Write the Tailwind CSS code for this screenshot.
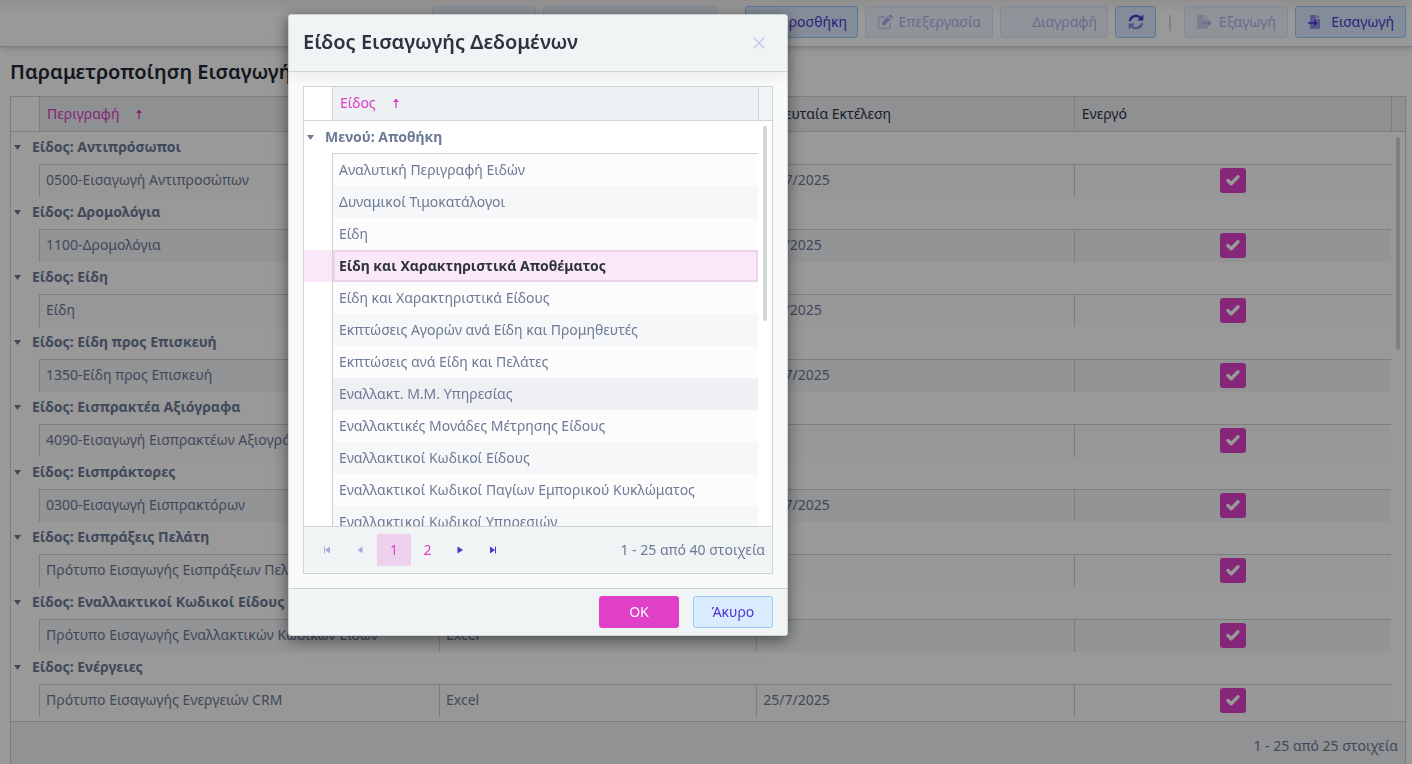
<!DOCTYPE html>
<html lang="el">
<head>
    <meta charset="UTF-8">
    <meta name="viewport" content="width=device-width, initial-scale=1.0">
    <title>Παραμετροποίηση Εισαγωγής Δεδομένων</title>
    <script src="https://cdn.jsdelivr.net/npm/@tailwindcss/browser@4"></script>
</head>
<body class="h-screen overflow-hidden bg-white font-['Noto_Sans',sans-serif] text-sm text-[#6c7a96]">
    <div class="flex h-full flex-col">
        <!-- Toolbar -->
        <header class="relative flex h-[47px] shrink-0 items-start justify-end gap-[7px] border-b border-[#d0d3d4] bg-gradient-to-b from-[#efefef] to-white to-30% pt-1.5 pr-1.5 text-[#4b36d0] shadow-md">
            <button aria-label="Αντιγραφή" disabled class="h-8 w-[104px] rounded-[3px] border border-[#99ccf9] bg-[#dbebff] opacity-40"></button>
            <button aria-label="Μαζική Εκτέλεση" disabled class="mr-[21px] h-8 w-[174px] rounded-[3px] border border-[#99ccf9] bg-[#dbebff] opacity-40"></button>
            <button class="flex h-8 w-[113px] items-center justify-end rounded-[3px] border border-[#99ccf9] bg-[#dbebff] pr-2.5">Προσθήκη</button>
            <button disabled class="flex h-8 w-32 items-center justify-between rounded-[3px] border border-[#99ccf9] bg-[#dbebff] px-[11px] opacity-40">
                <svg class="size-4" viewBox="0 0 16 16"><path d="M8 3H3.500A2 2 0 0 0 1.500 5v7.500a2 2 0 0 0 2 2H11a2 2 0 0 0 2-2V9" fill="none" stroke="currentColor" stroke-width="2" opacity=".5"/><path d="M5 11.200V8.300l5.700-5.700 2.900 2.900-5.700 5.700zM11.500 1.800l1-1a1.300 1.300 0 0 1 1.800 0l1.100 1.100a1.300 1.300 0 0 1 0 1.800l-1 1z" fill="currentColor"/></svg>
                Επεξεργασία
            </button>
            <button disabled class="flex h-8 w-[108px] items-center justify-end rounded-[3px] border border-[#99ccf9] bg-[#dbebff] pr-2.5 opacity-40">Διαγραφή</button>
            <button aria-label="Ανανέωση" class="flex h-8 w-[41px] items-center justify-center rounded-[3px] border border-[#99ccf9] bg-[#dbebff]">
                <svg class="size-4" viewBox="0 0 16 16" fill="none" stroke="currentColor" stroke-width="2.400"><path d="M1.800 7A6.200 6.200 0 0 1 12.600 4"/><path d="M15.300.6v6H9.200z" fill="currentColor" stroke="none"/><g opacity=".55"><path d="M14.200 9A6.200 6.200 0 0 1 3.400 12"/><path d="M.7 15.400v-6h6.100z" fill="currentColor" stroke="none"/></g></svg>
            </button>
            <span class="mx-1.5 mt-[9px] h-4 w-0.5 bg-[#d5d9da]"></span>
            <button disabled class="flex h-8 w-[104px] items-center justify-between rounded-[3px] border border-[#99ccf9] bg-[#dbebff] px-[11px] opacity-40">
                <svg class="size-4" viewBox="0 0 16 16" fill="currentColor"><path d="M2 1h6v4h4v9a1 1 0 0 1-1 1H2a1 1 0 0 1-1-1V2a1 1 0 0 1 1-1zM9 1l3 3H9z" opacity=".5"/><path d="M6 8.200h6V5.800L15.800 9 12 12.200V9.800H6z"/></svg>
                Εξαγωγή
            </button>
            <button class="flex h-8 w-[111px] items-center justify-between rounded-[3px] border border-[#99ccf9] bg-[#dbebff] px-[11px]">
                <svg class="size-4" viewBox="0 0 16 16" fill="currentColor"><path d="M4 1h5v4h4v9a1 1 0 0 1-1 1H4a1 1 0 0 1-1-1V2a1 1 0 0 1 1-1zM10 1l3 3h-3z" opacity=".5"/><path d="M1 8.200h6V5.800L10.800 9 7 12.200V9.800H1z"/></svg>
                Εισαγωγή
            </button>
        </header>

        <main class="flex min-h-0 flex-1 flex-col pr-1.5 pl-2.5">
            <h1 class="flex h-[49px] shrink-0 items-center text-xl font-semibold text-[#232733]">Παραμετροποίηση Εισαγωγής Δεδομένων</h1>
            <div class="relative min-h-0 flex-1 overflow-hidden border border-b-0 border-[#d0d3d4]">
                <table class="w-full table-fixed border-separate border-spacing-0 text-left">
                    <colgroup><col class="w-7"><col class="w-[400px]"><col><col><col><col class="w-3.5"></colgroup>
                    <thead class="bg-[#eef1f4] text-[#2d333f]">
                        <tr class="h-[35px]">
                            <td class="border-b border-[#d0d3d4] bg-white"></td>
                            <th class="border-b border-l border-[#d0d3d4] px-[7px] font-normal text-[#e040c8]">
                                <span class="flex items-center gap-4">Περιγραφή
                                    <svg class="h-2.5 w-2" viewBox="0 0 8 10" fill="none" stroke="currentColor"><path d="M4 10V1" stroke-width="1.300"/><path d="M1 4l3-3.600L7 4z" fill="currentColor" stroke="none"/></svg>
                                </span>
                            </th>
                            <th class="border-b border-l border-[#d0d3d4] px-[7px] font-normal">Τύπος</th>
                            <th class="border-b border-l border-[#d0d3d4] px-[7px] font-normal">Τελευταία Εκτέλεση</th>
                            <th class="border-b border-l border-[#d0d3d4] px-[7px] font-normal">Ενεργό</th>
                            <td class="border-b border-l border-[#d0d3d4]"></td>
                        </tr>
                    </thead>
                    <tbody id="imports"></tbody>
                </table>
                <div class="absolute top-10 right-[5px] h-[213px] w-1 rounded-full bg-[#d0d6d6]"></div>
            </div>
            <div class="flex h-[43px] shrink-0 items-start justify-end border-x border-t border-[#d0d3d4] bg-[#f0f3f5] px-[7px] pt-2 leading-8">1 - 25 από 25 στοιχεία</div>
        </main>
    </div>

    <div class="fixed inset-0 bg-black/40"></div>

    <!-- Dialog -->
    <section role="dialog" aria-labelledby="dialogTitle" class="fixed top-3.5 left-72 w-[500px] rounded-[3px] border border-[#d0d3d4] bg-[#f9fafc] shadow-[0_4px_16px_rgba(0,0,0,0.5)]">
        <header class="flex h-[57px] items-center justify-between rounded-t-[3px] border-b border-[#d0d3d4] bg-[#f0f4f5] px-3.5 shadow-[0_4px_16px_rgba(0,0,0,0.07)]">
            <h2 id="dialogTitle" class="pb-0.5 text-xl font-semibold text-[#2d333f]">Είδος Εισαγωγής Δεδομένων</h2>
            <button aria-label="Κλείσιμο" class="flex size-7 items-center justify-center text-[#cac6f3]">
                <svg class="size-3" viewBox="0 0 12 12" fill="none" stroke="currentColor" stroke-width="1.500"><path d="M.8.8l10.400 10.400M11.200.8L.8 11.200"/></svg>
            </button>
        </header>
        <div class="p-3.5">
            <div class="border border-[#d0d3d4] bg-white">
                <div class="relative h-[439px] overflow-hidden">
                    <table class="w-full table-fixed border-separate border-spacing-0 text-left">
                        <colgroup><col class="w-7"><col><col class="w-3.5"></colgroup>
                        <thead>
                            <tr class="h-[34px] bg-[#edf1f4]">
                                <td class="border-b border-[#d0d3d4] bg-white"></td>
                                <th class="border-b border-l border-[#d0d3d4] px-[7px] pb-0.5 font-normal text-[#e040c8]">
                                    <span class="flex items-center gap-4">Είδος
                                        <svg class="h-2.5 w-2" viewBox="0 0 8 10" fill="none" stroke="currentColor"><path d="M4 10V1" stroke-width="1.300"/><path d="M1 4l3-3.600L7 4z" fill="currentColor" stroke="none"/></svg>
                                    </span>
                                </th>
                                <td class="border-b border-l border-[#d0d3d4] bg-[#f0f4f5]"></td>
                            </tr>
                        </thead>
                        <tbody id="kinds"></tbody>
                    </table>
                    <div class="absolute top-[39px] right-[5px] h-[195px] w-1 rounded-full bg-[#d0d6d6]"></div>
                </div>
                <div class="flex h-[47px] items-center border-t border-[#d0d3d4] bg-[#f0f4f5] px-[7px] text-[#4b36d0]">
                    <button aria-label="Πρώτη σελίδα" disabled class="flex h-8 w-[33px] items-center justify-center pr-0.5 opacity-40">
                        <svg class="h-2 w-2" viewBox="0 0 8 8" fill="currentColor"><path d="M1 .5h1v7H1zM7 .5v7L2 4z"/></svg>
                    </button>
                    <button aria-label="Προηγούμενη σελίδα" disabled class="flex h-8 w-[33px] items-center justify-center pr-0.5 opacity-40">
                        <svg class="h-2 w-2" viewBox="0 0 8 8" fill="currentColor"><path d="M6.500.5v7L1.500 4z"/></svg>
                    </button>
                    <button class="h-8 w-[34px] bg-[#eed1ec] text-[#e040c8]">1</button>
                    <button class="h-8 w-[33px] text-[#e040c8]">2</button>
                    <button aria-label="Επόμενη σελίδα" class="flex h-8 w-[33px] items-center justify-center pr-0.5">
                        <svg class="h-2 w-2" viewBox="0 0 8 8" fill="currentColor"><path d="M1.500.5v7L7 4z"/></svg>
                    </button>
                    <button aria-label="Τελευταία σελίδα" class="flex h-8 w-[33px] items-center justify-center pr-0.5">
                        <svg class="h-2 w-2" viewBox="0 0 8 8" fill="currentColor"><path d="M1 .5v7L6 4zM6 .5h1v7H6z"/></svg>
                    </button>
                    <span class="ml-auto text-[#6c7a96]">1 - 25 από 40 στοιχεία</span>
                </div>
            </div>
        </div>
        <footer class="flex h-[47px] items-center justify-end gap-3.5 rounded-b-[3px] border-t border-[#d0d3d4] bg-[#f0f4f5] px-3.5">
            <button class="h-8 w-20 rounded-[3px] bg-[#e040c8] text-white">OK</button>
            <button class="h-8 w-20 rounded-[3px] border border-[#99ccf9] bg-[#dbebff] text-[#4b36d0]">Άκυρο</button>
        </footer>
    </section>

    <script>
        const imports = [
            { group: 'Αντιπρόσωποι', name: '0500-Εισαγωγή Αντιπροσώπων', date: '25/7/2025' },
            { group: 'Δρομολόγια', name: '1100-Δρομολόγια', date: '9/7/2025' },
            { group: 'Είδη', name: 'Είδη', date: '9/7/2025' },
            { group: 'Είδη προς Επισκευή', name: '1350-Είδη προς Επισκευή', date: '25/7/2025' },
            { group: 'Εισπρακτέα Αξιόγραφα', name: '4090-Εισαγωγή Εισπρακτέων Αξιογράφων', date: '' },
            { group: 'Εισπράκτορες', name: '0300-Εισαγωγή Εισπρακτόρων', date: '25/7/2025' },
            { group: 'Εισπράξεις Πελάτη', name: 'Πρότυπο Εισαγωγής Εισπράξεων Πελάτη', date: '' },
            { group: 'Εναλλακτικοί Κωδικοί Είδους', name: 'Πρότυπο Εισαγωγής Εναλλακτικών Κωδικών Ειδών', date: '' },
            { group: 'Ενέργειες', name: 'Πρότυπο Εισαγωγής Ενεργειών CRM', date: '25/7/2025' }
        ];
        const kinds = [
            'Αναλυτική Περιγραφή Ειδών',
            'Δυναμικοί Τιμοκατάλογοι',
            'Είδη',
            'Είδη και Χαρακτηριστικά Αποθέματος',
            'Είδη και Χαρακτηριστικά Είδους',
            'Εκπτώσεις Αγορών ανά Είδη και Προμηθευτές',
            'Εκπτώσεις ανά Είδη και Πελάτες',
            'Εναλλακτ. Μ.Μ. Υπηρεσίας',
            'Εναλλακτικές Μονάδες Μέτρησης Είδους',
            'Εναλλακτικοί Κωδικοί Είδους',
            'Εναλλακτικοί Κωδικοί Παγίων Εμπορικού Κυκλώματος',
            'Εναλλακτικοί Κωδικοί Υπηρεσιών'
        ];
        const selected = 3;
        const hovered = 7;

        const caret = '<svg class="h-[5px] w-[7px]" viewBox="0 0 7 5" fill="currentColor"><path d="M0 0h7L3.500 5z"/></svg>';

        document.getElementById('imports').innerHTML = imports.map((row, i) => {
            const bg = i % 2 ? 'bg-[#f5f7f9]' : 'bg-[#fcfcfc]';
            return `
                <tr class="h-8">
                    <th colspan="6" class="pb-0.5 pl-[3px] font-bold"><span class="flex items-center gap-[11px]">${caret}Είδος: ${row.group}</span></th>
                </tr>
                <tr class="h-[33px]">
                    <td></td>
                    <td class="truncate border-t border-l border-[#d0d3d4] px-1.5 pb-0.5 ${bg}">${row.name}</td>
                    <td class="border-t border-l border-[#d0d3d4] px-1.5 pb-0.5 ${bg}">Excel</td>
                    <td class="border-t border-l border-[#d0d3d4] px-1.5 pb-0.5 ${bg}">${row.date}</td>
                    <td class="border-t border-l border-[#d0d3d4] pb-0.5 ${bg}">
                        <label class="grid place-items-center">
                            <input type="checkbox" checked aria-label="Ενεργό: ${row.name}" class="col-start-1 row-start-1 h-[25px] w-[26px] appearance-none rounded-[3px] bg-[#e040c8]">
                            <svg class="pointer-events-none col-start-1 row-start-1 size-4" viewBox="0 0 16 16" fill="none" stroke="white" stroke-width="3.400" stroke-linecap="round" stroke-linejoin="round"><path d="M2.900 8.500l3.300 3.300 6.800-7"/></svg>
                        </label>
                    </td>
                    <td></td>
                </tr>
            `;
        }).join('');

        document.getElementById('kinds').innerHTML = `
            <tr class="h-8">
                <th colspan="3" class="pl-[3px] font-bold"><span class="flex items-center gap-[11px]">${caret}Μενού: Αποθήκη</span></th>
            </tr>
        ` + kinds.map((name, i) => {
            let style = i % 2 ? 'bg-[#f5f7f9]' : 'bg-[#fcfcfc]';
            if (i === hovered) style = 'bg-[#eff0f4]';
            if (i === selected) style = 'bg-[#fae7f8] font-bold text-[#2d333f] inset-ring-2 inset-ring-[#ead5e8]';
            return `
                <tr class="${i === 0 ? 'h-[33px]' : 'h-8'}">
                    <td class="${i === selected ? 'bg-[#fae7f8]' : ''}"></td>
                    <td class="truncate border-l border-[#d0d3d4] px-1.5 ${i === 0 ? 'border-t' : ''} ${style}">${name}</td>
                    <td></td>
                </tr>
            `;
        }).join('');
    </script>
</body>
</html>
